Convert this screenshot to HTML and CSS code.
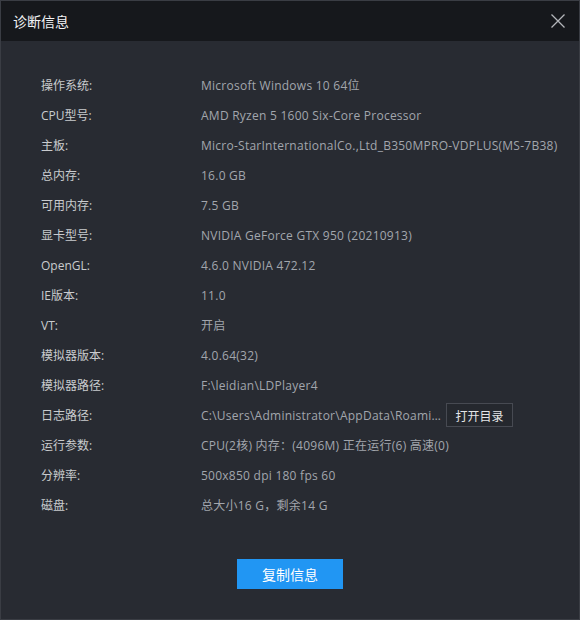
FILE: index.html
```html
<!DOCTYPE html>
<html lang="zh">
<head>
<meta charset="utf-8">
<link rel="stylesheet" href="styles.css">
</head>
<body>
<div class="window">
  <div class="titlebar">
    <span class="title">诊断信息</span>
    <span class="close">
      <svg width="14" height="14" viewBox="0 0 14 14"><path d="M0.5 0.5L13.5 13.5M13.5 0.5L0.5 13.5" stroke="#b4b6ba" stroke-width="1.3"/></svg>
    </span>
  </div>
  <div class="content">
    <div class="rows">
      <div class="row"><span class="label">操作系统:</span><span class="value">Microsoft Windows 10 64位</span></div>
      <div class="row"><span class="label">CPU型号:</span><span class="value">AMD Ryzen 5 1600 Six-Core Processor</span></div>
      <div class="row"><span class="label">主板:</span><span class="value">Micro-StarInternationalCo.,Ltd_B350MPRO-VDPLUS(MS-7B38)</span></div>
      <div class="row"><span class="label">总内存:</span><span class="value">16.0 GB</span></div>
      <div class="row"><span class="label">可用内存:</span><span class="value">7.5 GB</span></div>
      <div class="row"><span class="label">显卡型号:</span><span class="value">NVIDIA GeForce GTX 950 (20210913)</span></div>
      <div class="row"><span class="label">OpenGL:</span><span class="value">4.6.0 NVIDIA 472.12</span></div>
      <div class="row"><span class="label">IE版本:</span><span class="value">11.0</span></div>
      <div class="row"><span class="label">VT:</span><span class="value">开启</span></div>
      <div class="row"><span class="label">模拟器版本:</span><span class="value">4.0.64(32)</span></div>
      <div class="row"><span class="label">模拟器路径:</span><span class="value">F:\leidian\LDPlayer4</span></div>
      <div class="row"><span class="label">日志路径:</span><span class="value path">C:\Users\Administrator\AppData\Roaming\LDPlayer4\log</span><button class="open-btn">打开目录</button></div>
      <div class="row"><span class="label">运行参数:</span><span class="value">CPU(2核) 内存：(4096M) 正在运行(6) 高速(0)</span></div>
      <div class="row"><span class="label">分辨率:</span><span class="value">500x850 dpi 180 fps 60</span></div>
      <div class="row"><span class="label">磁盘:</span><span class="value">总大小16 G，剩余14 G</span></div>
    </div>
    <div class="actions">
      <button class="copy-btn">复制信息</button>
    </div>
  </div>
</div>
</body>
</html>
```
FILE: styles.css
```css
html, body {
  margin: 0;
  padding: 0;
  background: #272a31;
}
body {
  font-family: "Open Sans", "Noto Sans CJK SC", sans-serif;
}
.window {
  width: 580px;
  height: 620px;
  box-sizing: border-box;
  border: 1px solid #3a3d44;
  background: #282b32;
  display: flex;
  flex-direction: column;
}
.titlebar {
  height: 40px;
  flex: none;
  background: #16181c;
  display: flex;
  align-items: center;
  justify-content: space-between;
  padding: 0 14px 0 12px;
}
.title {
  color: #f2f3f5;
  font-size: 14px;
  font-family: "Noto Sans CJK SC", sans-serif;
}
.close {
  display: flex;
  width: 14px;
  height: 14px;
}
.content {
  padding: 29px 40px 0 40px;
  display: flex;
  flex-direction: column;
}
.row {
  height: 30px;
  display: flex;
  align-items: center;
  font-size: 12px;
}
.label {
  width: 160px;
  flex: none;
  color: #c9cbce;
}
.value {
  color: #a2a6ad;
  white-space: nowrap;
  letter-spacing: 0.25px;
}
.path {
  width: 240px;
  overflow: hidden;
  text-overflow: ellipsis;
}
.open-btn {
  margin-left: 5px;
  height: 24px;
  width: 67px;
  box-sizing: border-box;
  border: 1px solid #474a52;
  background: #25282e;
  color: #e4e5e7;
  font-family: "Noto Sans CJK SC", sans-serif;
  font-size: 12px;
  padding: 0;
}
.actions {
  display: flex;
  justify-content: center;
  margin-top: 39px;
}
.copy-btn {
  width: 106px;
  height: 30px;
  border: none;
  background: #2196f3;
  color: #ffffff;
  font-family: "Noto Sans CJK SC", sans-serif;
  font-size: 14px;
  padding: 0;
}
```
